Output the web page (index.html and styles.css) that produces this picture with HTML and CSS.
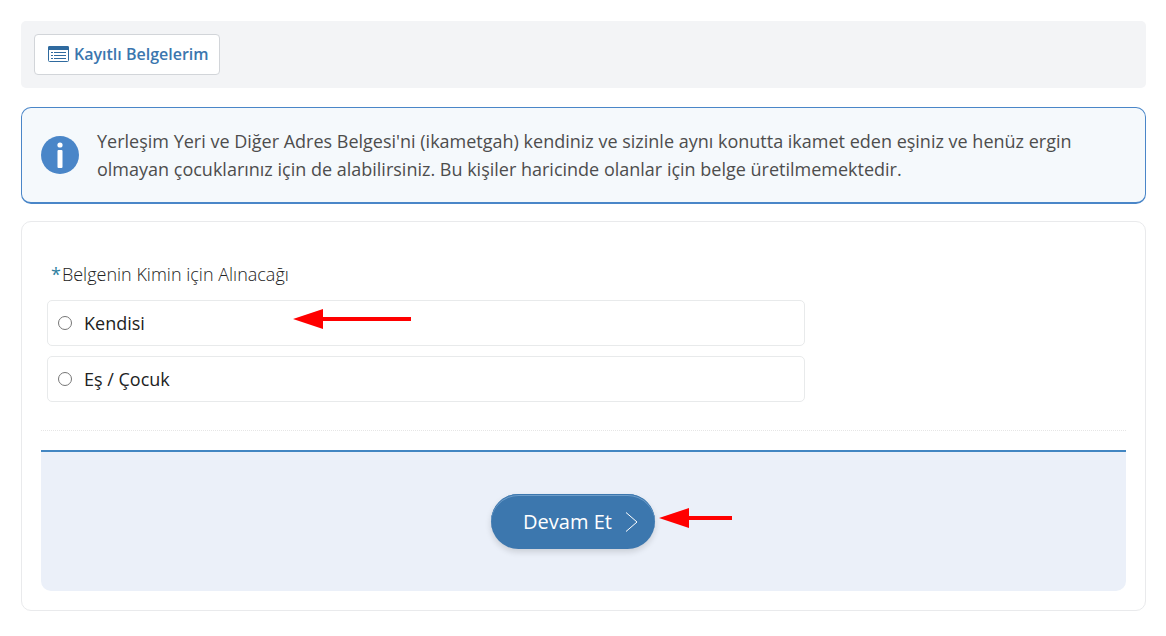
FILE: index.html
```html
<!DOCTYPE html>
<html lang="tr">
<head>
<meta charset="utf-8">
<meta name="viewport" content="width=device-width, initial-scale=1">
<title>Yerleşim Yeri ve Diğer Adres Belgesi</title>
<link rel="stylesheet" href="styles.css">
</head>
<body>
<main class="page">
  <nav class="toolbar">
    <a class="saved-link" href="#">
      <svg class="saved-icon" viewBox="0 0 21 17" aria-hidden="true">
        <rect x="0.5" y="0.5" width="20" height="15" rx="1" fill="#fff" stroke="#2f6a9f"/>
        <path d="M0 4V1.5Q0 0 1.5 0H19.5Q21 0 21 1.5V4Z" fill="#2f6a9f"/>
        <path d="M3 6.5H5M3 9.5H5M3 12.5H5M6 6.5H18M6 9.5H18M6 12.5H18" stroke="#2f6a9f" stroke-width="1"/>
      </svg>
      <span>Kayıtlı Belgelerim</span>
    </a>
  </nav>

  <section class="info">
    <svg class="info-icon" viewBox="0 0 38 38" aria-hidden="true">
      <circle cx="19" cy="19" r="19" fill="#4a86c8"/>
      <circle cx="19" cy="9" r="2.6" fill="#fff"/>
      <rect x="16.5" y="14" width="5" height="18" rx="1" fill="#fff"/>
    </svg>
    <p class="info-text">Yerleşim Yeri ve Diğer Adres Belgesi'ni (ikametgah) kendiniz ve sizinle aynı konutta ikamet eden eşiniz ve henüz ergin olmayan çocuklarınız için de alabilirsiniz. Bu kişiler haricinde olanlar için belge üretilmemektedir.</p>
  </section>

  <form class="card">
    <fieldset class="field">
      <legend class="field-title"><span class="required">*</span>Belgenin Kimin için Alınacağı</legend>
      <div class="options">
        <label class="option">
          <input class="radio" type="radio" name="kimin" value="kendisi">
          <span>Kendisi</span>
          <svg class="arrow arrow-option" viewBox="0 0 118 20" aria-hidden="true">
            <path d="M0 10L30 0V8H118V12H30V20Z" fill="#f00"/>
          </svg>
        </label>
        <label class="option">
          <input class="radio" type="radio" name="kimin" value="es-cocuk">
          <span>Eş / Çocuk</span>
        </label>
      </div>
    </fieldset>
    <div class="actions">
      <div class="submit-wrap">
        <button class="submit" type="submit">
          <span>Devam Et</span>
          <svg class="chevron" viewBox="0 0 13 20" aria-hidden="true">
            <path d="M1 0.5L12 10L1 19.5" fill="none" stroke="#fff" stroke-width="1"/>
          </svg>
        </button>
        <svg class="arrow arrow-submit" viewBox="0 0 73 20" aria-hidden="true">
          <path d="M0 10L30 0V8H73V12H30V20Z" fill="#f00"/>
        </svg>
      </div>
    </div>
  </form>
</main>
</body>
</html>
```

FILE: styles.css
```css
* {
  box-sizing: border-box;
}

body {
  margin: 0;
  background: #fff;
  color: #222;
  font-family: "Open Sans", "Noto Sans", sans-serif;
  font-size: 18px;
  line-height: 28px;
}

.page {
  display: flex;
  flex-direction: column;
  padding: 21px 20px 24px 21px;
}

.toolbar {
  display: flex;
  padding: 13px;
  margin-bottom: 19px;
  border-radius: 5px;
  background: #f3f4f6;
}

.saved-link {
  display: flex;
  align-items: center;
  gap: 5px;
  padding: 6px 10px 6px 13px;
  border: 1px solid #d2d5d9;
  border-radius: 4px;
  background: #fff;
  color: #3b76ae;
  font-size: 16px;
  font-weight: 600;
  line-height: 27px;
  text-decoration: none;
}

.saved-icon {
  width: 21px;
  height: 17px;
}

.info {
  display: flex;
  align-items: center;
  gap: 18px;
  padding: 19px;
  margin-bottom: 17px;
  border: 1px solid #4a86c8;
  border-bottom-width: 2px;
  border-radius: 10px;
  background: #f5f9fc;
  color: #4d4d4d;
}

.info-icon {
  flex: none;
  width: 38px;
  height: 38px;
}

.info-text {
  margin: 0;
}

.card {
  padding: 38px 19px 19px;
  border: 1px solid #e9eaec;
  border-radius: 10px;
}

.field {
  margin: 0 0 19px;
  padding: 0 0 28px;
  border: 0;
  border-bottom: 1px dotted #e6e6e6;
}

.field-title {
  padding: 0 10px;
  font-weight: 300;
}

.required {
  margin-right: 1px;
  color: #2f7f9f;
  font-weight: 400;
}

.options {
  display: flex;
  flex-direction: column;
  gap: 10px;
  width: calc(70% + 4px);
  padding: 12px 0 0 6px;
}

.option {
  position: relative;
  display: flex;
  align-items: center;
  gap: 12px;
  padding: 8px 10px;
  border: 1px solid #e8eaeb;
  border-radius: 5px;
}

.radio {
  appearance: none;
  width: 14px;
  height: 14px;
  margin: 0;
  border: 1px solid #767676;
  border-radius: 50%;
  background: #fff;
}

.radio:checked {
  border: 4px solid #3b76ae;
}

.actions {
  display: flex;
  justify-content: center;
  padding: 42px 41px 42px 20px;
  border-top: 2px solid #4286c2;
  border-radius: 0 0 10px 10px;
  background: #ebf0f9;
}

.submit-wrap {
  position: relative;
}

.submit {
  display: flex;
  align-items: center;
  gap: 13px;
  padding: 13px 17px 13px 32px;
  border: 0;
  border-radius: 28px;
  background: #3c77ae;
  box-shadow: inset 0 1px 0 #3c77ae, inset 0 2px 0 #6d9cc8, 0 3px 6px rgba(0, 0, 0, 0.14);
  color: #fff;
  font-family: inherit;
  font-size: 20px;
  line-height: 29px;
  cursor: pointer;
}

.chevron {
  width: 13px;
  height: 20px;
}

.arrow {
  position: absolute;
  height: 20px;
  pointer-events: none;
}

.arrow-option {
  top: 8px;
  left: 245px;
  width: 118px;
}

.arrow-submit {
  top: 14px;
  left: 168px;
  width: 73px;
}
```
